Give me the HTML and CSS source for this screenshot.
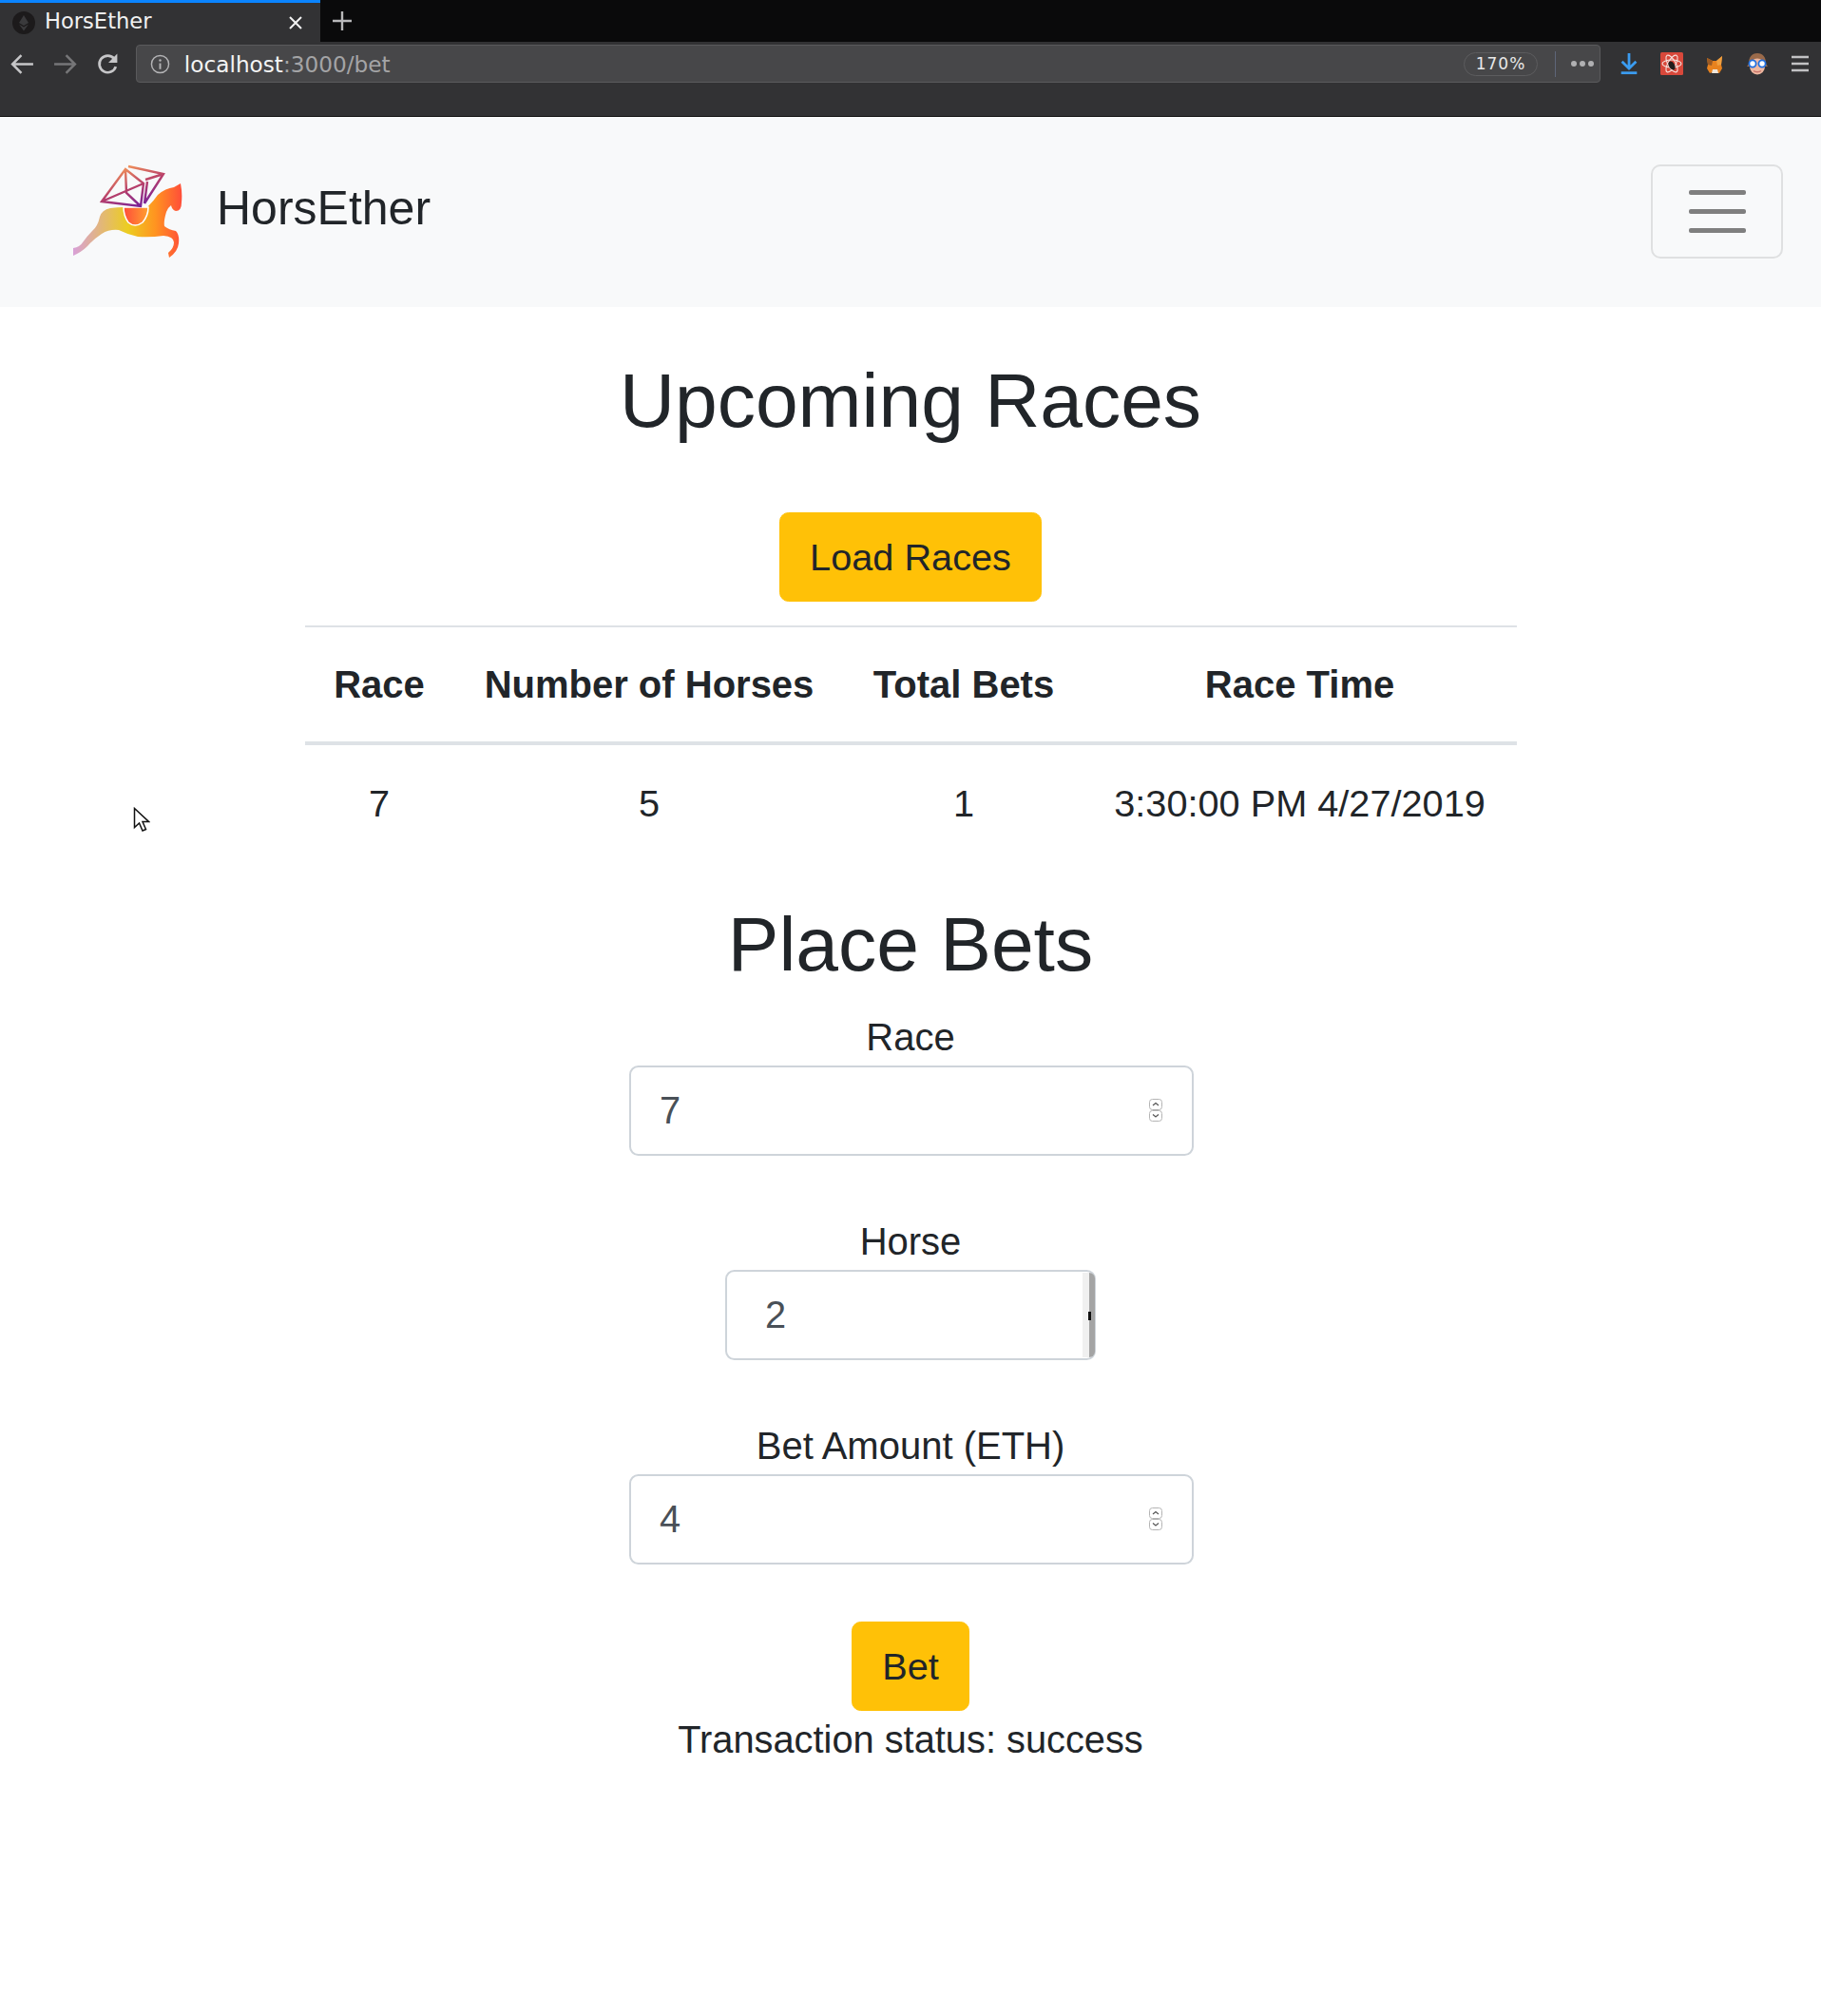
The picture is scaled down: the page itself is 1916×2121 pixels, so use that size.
FILE: index.html
```html
<!DOCTYPE html>
<html lang="en">
<head>
    <meta charset="UTF-8">
    <meta name="viewport" content="width=device-width, initial-scale=1.0">
    <title>HorsEther</title>
    <link rel="stylesheet" href="styles.css">
</head>
<body>
    <div class="tabbar">
        <div class="tab">
            <svg class="favicon" viewBox="0 0 24 24">
                <circle cx="12" cy="12" r="12" fill="#1c1a1b"/>
                <path d="M12 4l5 8-5 3-5-3zM7 13.5l5 3 5-3-5 7z" fill="#3a3a3c"/>
            </svg>
            <span class="tab-title">HorsEther</span>
            <svg class="tab-close" viewBox="0 0 16 16">
                <path d="M2 2l12 12M14 2L2 14" stroke="#f2f2f2" stroke-width="2"/>
            </svg>
        </div>
        <svg class="new-tab" viewBox="0 0 22 22">
            <path d="M11 1v20M1 11h20" stroke="#b8b8ba" stroke-width="2.4"/>
        </svg>
    </div>

    <div class="toolbar">
        <div class="tool-btn">
            <svg class="nav-icon" viewBox="0 0 26 26"><path d="M24 13H3M12 4l-9 9 9 9" fill="none" stroke="#c6c6c8" stroke-width="2.4"/></svg>
        </div>
        <div class="tool-btn">
            <svg class="nav-icon" viewBox="0 0 26 26"><path d="M2 13h21M14 4l9 9-9 9" fill="none" stroke="#767678" stroke-width="2.4"/></svg>
        </div>
        <div class="tool-btn">
            <svg class="nav-icon" viewBox="0 0 26 26"><path d="M21 15.500a8.500 8.500 0 1 1-1.500-8" fill="none" stroke="#c6c6c8" stroke-width="2.600"/><path d="M22.500 2.500v9h-9z" fill="#c6c6c8"/></svg>
        </div>
        <div class="urlbar">
            <svg class="info-icon" viewBox="0 0 22 22">
                <circle cx="11" cy="11" r="9.500" fill="none" stroke="#b4b4b6" stroke-width="1.500"/>
                <path d="M11 10v6.500" stroke="#b4b4b6" stroke-width="2"/>
                <circle cx="11" cy="6.800" r="1.300" fill="#b4b4b6"/>
            </svg>
            <span class="url-host">localhost</span><span class="url-rest">:3000/bet</span>
            <span class="zoom-pill">170%</span>
            <span class="url-sep"></span>
            <span class="url-dots"><i></i><i></i><i></i></span>
        </div>
        <div class="tool-actions">
            <div class="tool-btn">
                <svg viewBox="0 0 24 26"><path d="M12 1v17M4 10.500l8 8 8-8" fill="none" stroke="#3b9cf0" stroke-width="3"/><rect x="3" y="22" width="18" height="3" fill="#3b9cf0"/></svg>
            </div>
            <div class="tool-btn">
                <svg viewBox="0 0 24 24">
                    <rect width="24" height="24" rx="1.500" fill="#d8483b"/>
                    <g fill="none" stroke="#f6e3df" stroke-width="1.100">
                        <ellipse cx="12" cy="12" rx="10" ry="4"/>
                        <ellipse cx="12" cy="12" rx="10" ry="4" transform="rotate(60 12 12)"/>
                        <ellipse cx="12" cy="12" rx="10" ry="4" transform="rotate(120 12 12)"/>
                    </g>
                    <ellipse cx="12" cy="14" rx="3" ry="5" fill="#221c1c" transform="rotate(-30 12 14)"/>
                    <circle cx="11" cy="12" r="2.200" fill="#221c1c"/>
                </svg>
            </div>
            <div class="tool-btn">
                <svg viewBox="0 0 20 24">
                    <path d="M2 6l6 3h4l6-5-1 9 1 4-3 5-5-1H8l-3 1-3-5 1-4z" fill="#e8821e"/>
                    <path d="M2 6l6 3-1 5-4-1z" fill="#9a5a24"/>
                    <path d="M8 18l5 0 1 4H7z" fill="#efe6dc"/>
                    <path d="M12 9l6-5-1 9-4 1z" fill="#f0a040"/>
                </svg>
            </div>
            <div class="tool-btn">
                <svg viewBox="0 0 22 24">
                    <path d="M11 1c6 0 9 4 9 11l2 3h-3l-8 2-8-2H0l2-3C2 5 5 1 11 1z" fill="#9a6a4a"/>
                    <ellipse cx="11" cy="15" rx="8" ry="8.500" fill="#eeb8a0"/>
                    <circle cx="6" cy="12" r="3.600" fill="#fff" stroke="#1f6fe0" stroke-width="1.800"/>
                    <circle cx="16" cy="12" r="3.600" fill="#fff" stroke="#1f6fe0" stroke-width="1.800"/>
                    <path d="M7 19.500c2 1.500 6 1.500 8 0" fill="none" stroke="#c9746a" stroke-width="1.500"/>
                </svg>
            </div>
            <div class="tool-btn">
                <svg class="menu-icon" viewBox="0 0 18 18"><path d="M0 2h18M0 9h18M0 16h18" stroke="#c2c2c4" stroke-width="2.600"/></svg>
            </div>
        </div>
    </div>

    <nav class="navbar">
        <a class="brand" href="#">
            <svg class="logo" viewBox="20 15 130 110">
                <defs>
                    <linearGradient id="horseFill" x1="27" y1="0" x2="142" y2="0" gradientUnits="userSpaceOnUse">
                        <stop offset="0" stop-color="#d8a0d8"/>
                        <stop offset="0.5" stop-color="#eccd20"/>
                        <stop offset="0.75" stop-color="#ff9420"/>
                        <stop offset="1" stop-color="#ff4c3a"/>
                    </linearGradient>
                    <linearGradient id="saddleFill" x1="80" y1="0" x2="106" y2="0" gradientUnits="userSpaceOnUse">
                        <stop offset="0" stop-color="#ff4c3a"/>
                        <stop offset="1" stop-color="#ffa030"/>
                    </linearGradient>
                    <linearGradient id="gemStroke" x1="84" y1="24" x2="100" y2="66" gradientUnits="userSpaceOnUse">
                        <stop offset="0" stop-color="#f0905a"/>
                        <stop offset="0.5" stop-color="#b8406a"/>
                        <stop offset="1" stop-color="#76209a"/>
                    </linearGradient>
                </defs>
                <path d="M27 118V110Q34 109 37 104Q42 97 47 92Q53 87 55 77Q57 70 66 68Q74 67 80 67H105Q112 60 116 54Q124 47 133 46L140 42Q142 52 141 62Q141 71 135 71Q131 70 130 65Q126 68 125 72Q122 82 123 87Q128 91 135 92Q139 96 138 105Q137 114 128 120L127 115Q133 110 133 104Q133 98 122 97Q108 99 95 98Q85 96 75 91Q65 90 57 95Q48 101 42 108Q36 114 27 118Z" fill="url(#horseFill)"/>
                <path d="M80 67H106Q106 76 100 83Q92 89 85 83Q80 76 80 67Z" fill="url(#saddleFill)" stroke="#fff" stroke-width="1.500"/>
                <g fill="none" stroke="url(#gemStroke)" stroke-width="2.400">
                    <path d="M57 61L82 27L101 42L98 66ZM57 61L101 42M82 27L83 52L98 66"/>
                    <path d="M85 24L122 32L102 63M103 38L122 32M105 40L102 63"/>
                </g>
            </svg>
            <span class="brand-name">HorsEther</span>
        </a>
        <button class="toggler" type="button"><span></span><span></span><span></span></button>
    </nav>

    <main class="content">
        <h1>Upcoming Races</h1>
        <button class="btn btn-load" type="button">Load Races</button>

        <table class="races">
            <thead>
                <tr>
                    <th class="col-race">Race</th>
                    <th class="col-horses">Number of Horses</th>
                    <th class="col-bets">Total Bets</th>
                    <th class="col-time">Race Time</th>
                </tr>
            </thead>
            <tbody>
                <tr>
                    <td>7</td>
                    <td>5</td>
                    <td>1</td>
                    <td>3:30:00 PM 4/27/2019</td>
                </tr>
            </tbody>
        </table>

        <h1 class="bets-title">Place Bets</h1>
        <form class="bet-form">
            <div class="form-group">
                <label for="race">Race</label>
                <div class="field">
                    <input id="race" class="form-control" type="text" value="7">
                    <svg class="spinner" viewBox="0 0 14 24">
                        <g fill="#fff" stroke="#b4b4b4">
                            <rect x="0.500" y="0.500" width="13" height="11" rx="3"/>
                            <rect x="0.500" y="12.500" width="13" height="11" rx="3"/>
                        </g>
                        <path d="M4 7l3-2.500L10 7M4 16.500L7 19l3-2.500" fill="none" stroke="#555" stroke-width="1.200"/>
                    </svg>
                </div>
            </div>
            <div class="form-group">
                <label for="horse">Horse</label>
                <div class="field field-small">
                    <input id="horse" class="form-control" type="text" value="2">
                    <div class="scroll-strip"><span class="scroll-tick"></span></div>
                </div>
            </div>
            <div class="form-group">
                <label for="amount">Bet Amount (ETH)</label>
                <div class="field">
                    <input id="amount" class="form-control" type="text" value="4">
                    <svg class="spinner" viewBox="0 0 14 24">
                        <g fill="#fff" stroke="#b4b4b4">
                            <rect x="0.500" y="0.500" width="13" height="11" rx="3"/>
                            <rect x="0.500" y="12.500" width="13" height="11" rx="3"/>
                        </g>
                        <path d="M4 7l3-2.500L10 7M4 16.500L7 19l3-2.500" fill="none" stroke="#555" stroke-width="1.200"/>
                    </svg>
                </div>
            </div>
            <button class="btn" type="button">Bet</button>
            <p class="status">Transaction status: success</p>
        </form>
    </main>

    <svg class="cursor" viewBox="0 0 18 26">
        <path d="M1.500 1.500v20l5-4.500 3.500 8 3.500-1.500-3.500-8h6.500z" fill="#fff" stroke="#111" stroke-width="1.500"/>
    </svg>
</body>
</html>
```

FILE: styles.css
```css
* {
    box-sizing: border-box;
}

body {
    margin: 0;
    min-height: 2121px;
    font-family: "Liberation Sans", Arial, sans-serif;
    font-size: 39.800px;
    line-height: 60px;
    color: #212529;
    background: #fff;
    text-align: center;
}

/* browser chrome */
.tabbar {
    display: flex;
    align-items: center;
    height: 44px;
    background: #0a0a0b;
}

.tab {
    display: flex;
    align-items: center;
    width: 337px;
    height: 44px;
    padding: 0 18px 0 13px;
    background: #323234;
    border-top: 3px solid #0a84ff;
}

.favicon {
    width: 24px;
    height: 24px;
}

.tab-title {
    margin-left: 10px;
    margin-bottom: 2px;
    font-family: "DejaVu Sans", sans-serif;
    font-size: 22.600px;
    line-height: 1;
    color: #f1f1f1;
}

.tab-close {
    width: 16px;
    height: 16px;
    margin-left: auto;
}

.new-tab {
    width: 22px;
    height: 22px;
    margin-left: 12px;
}

.toolbar {
    display: flex;
    align-items: flex-start;
    height: 79px;
    padding-top: 3px;
    background: #323234;
    border-bottom: 1px solid #111;
}

.tool-btn {
    display: flex;
    align-items: center;
    justify-content: center;
    width: 45px;
    height: 40px;
}

.tool-btn svg {
    width: 24px;
    height: 24px;
}

.tool-btn .nav-icon {
    width: 27px;
    height: 27px;
}

.tool-btn .menu-icon {
    width: 18px;
    height: 18px;
}

.toolbar > .tool-btn:first-child {
    margin-left: 1px;
}

.urlbar {
    display: flex;
    align-items: center;
    width: 1543px;
    height: 40px;
    margin-left: 7px;
    padding: 0 4px 0 14px;
    background: #474749;
    border: 1px solid #5a5a5c;
    border-radius: 4px;
    font-family: "DejaVu Sans", sans-serif;
    font-size: 23.200px;
    line-height: 1;
}

.info-icon {
    width: 21px;
    height: 21px;
    margin-right: 15px;
}

.url-host {
    margin-top: 2px;
    color: #f4f4f4;
}

.url-rest {
    margin-top: 2px;
    color: #a4a4a6;
}

.zoom-pill {
    width: 78px;
    height: 25px;
    margin-left: auto;
    border: 1px solid #5c5c5e;
    border-radius: 13px;
    font-size: 17px;
    line-height: 23px;
    letter-spacing: 1px;
    color: #e8e8e8;
}

.url-sep {
    width: 1px;
    height: 27px;
    margin-left: 18px;
    background: #5e6678;
}

.url-dots {
    display: flex;
    gap: 3px;
    margin-left: 16px;
    margin-right: 2px;
}

.url-dots i {
    width: 6px;
    height: 6px;
    border-radius: 50%;
    background: #b0b0b2;
}

.tool-actions {
    display: flex;
    margin-left: 7px;
}

/* navbar */
.navbar {
    display: flex;
    align-items: center;
    justify-content: space-between;
    height: 200px;
    padding: 0 40px 0 75px;
    background: #f8f9fa;
}

.brand {
    display: flex;
    align-items: center;
    color: #212529;
    text-decoration: none;
}

.logo {
    width: 130px;
    height: 110px;
    margin-left: -5px;
    margin-bottom: 5px;
}

.brand-name {
    margin-left: 28px;
    margin-bottom: 8px;
    font-size: 50px;
    line-height: 75px;
}

.toggler {
    display: flex;
    flex-direction: column;
    align-items: center;
    gap: 15px;
    width: 139px;
    height: 99px;
    margin-bottom: 2px;
    padding: 25px 0 0;
    background: transparent;
    border: 2px solid #dfe0e1;
    border-radius: 10px;
}

.toggler span {
    width: 60px;
    height: 5px;
    border-radius: 2px;
    background: #7f7f7f;
}

/* page */
.content {
    display: flex;
    flex-direction: column;
    align-items: center;
}

h1 {
    margin: 50px 0 70px;
    font-size: 80.400px;
    font-weight: 400;
    line-height: 96px;
}

.btn {
    height: 94px;
    padding: 0 31px;
    font: inherit;
    font-size: 39.700px;
    color: #212529;
    background: #ffc107;
    border: 1px solid #ffc107;
    border-radius: 9.600px;
}

.races {
    width: 1275px;
    margin-top: 25px;
    border-collapse: collapse;
    border-top: 2px solid #dee2e6;
    table-layout: fixed;
    white-space: nowrap;
}

.col-race {
    width: 157px;
}

.col-horses {
    width: 411px;
}

.col-bets {
    width: 251px;
}

.col-time {
    width: 456px;
}

.races th,
.races td {
    text-align: center;
}

.races td {
    padding: 31px 0 33px;
    font-size: 39.700px;
}

.races th {
    padding: 30px 0;
    border-bottom: 4px solid #dee2e6;
    font-size: 40px;
    font-weight: 700;
}

.bets-title {
    margin: 37px 0 20px;
}

.bet-form {
    display: flex;
    flex-direction: column;
    align-items: center;
}

.form-group {
    display: flex;
    flex-direction: column;
    align-items: center;
    margin-bottom: 60px;
}

.form-group:nth-child(3) {
    margin-bottom: 60px;
}

.form-group label {
    display: block;
    font-size: 40px;
}

.field {
    position: relative;
    width: 594px;
    margin-left: 2px;
}

.field-small {
    width: 390px;
    margin-left: 0;
}

.form-control {
    display: block;
    width: 100%;
    height: 95px;
    padding: 0 30px;
    font: inherit;
    color: #495057;
    background: #fff;
    border: 2px solid #ced4da;
    border-radius: 9.600px;
}

.field-small .form-control {
    padding-left: 40px;
}

.spinner {
    position: absolute;
    top: 35px;
    right: 33px;
    width: 14px;
    height: 24px;
}

.scroll-strip {
    position: absolute;
    top: 3px;
    right: 1px;
    bottom: 3px;
    width: 13px;
    background: #f0f0f0;
    border-right: 6px solid #a4a4a4;
    border-radius: 0 6px 6px 0;
}

.scroll-tick {
    position: absolute;
    top: 41px;
    right: -2px;
    width: 3px;
    height: 9px;
    background: #111;
}

.status {
    margin: 0;
}

.cursor {
    position: absolute;
    top: 849px;
    left: 140px;
    width: 18px;
    height: 26px;
}
```
